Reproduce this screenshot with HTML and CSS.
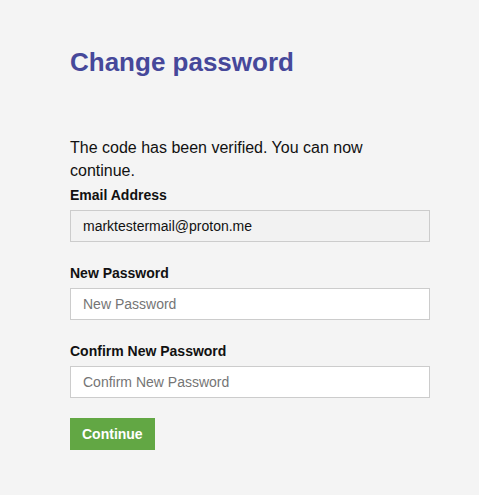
FILE: index.html
```html
<!DOCTYPE html>
<html>
<head>
<meta charset="utf-8">
<link rel="stylesheet" href="styles.css">
</head>
<body>
<main class="page">
  <h1 class="title">Change password</h1>
  <p class="intro">The code has been verified. You can now continue.</p>
  <form class="form">
    <label class="label" for="email">Email Address</label>
    <input class="field field-readonly" id="email" type="text" value="marktestermail@proton.me" readonly>
    <label class="label" for="np">New Password</label>
    <input class="field" id="np" type="password" placeholder="New Password">
    <label class="label" for="cp">Confirm New Password</label>
    <input class="field" id="cp" type="password" placeholder="Confirm New Password">
    <button class="btn" type="button">Continue</button>
  </form>
</main>
</body>
</html>
```
FILE: styles.css
```css
html, body {
  margin: 0;
  padding: 0;
  background: #f4f4f4;
}
body {
  font-family: "Liberation Sans", Arial, sans-serif;
  color: #111;
}
.page {
  width: 360px;
  padding: 45px 0 40px 70px;
}
.title {
  margin: 0;
  font-size: 26px;
  font-weight: bold;
  color: #46489a;
  line-height: 34px;
}
.intro {
  margin: 57px 0 0 0;
  font-size: 16px;
  line-height: 23px;
  color: #111;
}
.form {
  display: flex;
  flex-direction: column;
  align-items: flex-start;
}
.label {
  font-size: 14px;
  font-weight: bold;
  line-height: 18px;
  margin-top: 4px;
  margin-bottom: 6px;
}
.label ~ .label {
  margin-top: 22px;
}
.field {
  box-sizing: border-box;
  width: 360px;
  height: 32px;
  border: 1px solid #cccccc;
  background: #ffffff;
  padding: 0 12px;
  font-family: "Liberation Sans", Arial, sans-serif;
  font-size: 14px;
  color: #111;
  outline: none;
  margin: 0;
}
.field::placeholder {
  color: #757575;
}
.field-readonly {
  background: #f2f2f2;
}
.btn {
  margin-top: 20px;
  height: 32px;
  padding: 0 12px;
  background: #62a744;
  color: #fff;
  border: none;
  font-family: "Liberation Sans", Arial, sans-serif;
  font-size: 14px;
  font-weight: bold;
  cursor: pointer;
}
```
